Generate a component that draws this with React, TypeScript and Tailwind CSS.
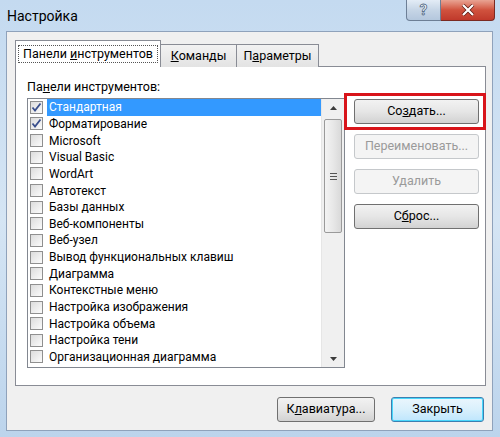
import React from "react";

const items = [
  { label: "Стандартная", checked: true, selected: true },
  { label: "Форматирование", checked: true },
  { label: "Microsoft" },
  { label: "Visual Basic" },
  { label: "WordArt" },
  { label: "Автотекст" },
  { label: "Базы данных" },
  { label: "Веб-компоненты" },
  { label: "Веб-узел" },
  { label: "Вывод функциональных клавиш" },
  { label: "Диаграмма" },
  { label: "Контекстные меню" },
  { label: "Настройка изображения" },
  { label: "Настройка объема" },
  { label: "Настройка тени" },
  { label: "Организационная диаграмма" },
];

function Checkbox({ checked }: { checked?: boolean }) {
  return (
    <div className="w-[13px] h-[13px] shrink-0 border border-[#8f8f8f] bg-gradient-to-br from-[#dcdcdc] to-[#fbfbfb] flex items-center justify-center">
      {checked && (
        <svg width="11" height="11" viewBox="0 0 11 11">
          <path d="M1.5 5.5 L4 8.5 L9.5 1.5" fill="none" stroke="#3a4f8c" strokeWidth="1.8" />
        </svg>
      )}
    </div>
  );
}

function Btn({
  children,
  disabled,
  className = "",
}: {
  children: React.ReactNode;
  disabled?: boolean;
  className?: string;
}) {
  return (
    <div
      className={
        "h-[25px] rounded-[3px] border flex items-center justify-center " +
        (disabled
          ? "border-[#c5c8cb] bg-[#f4f4f4] text-[#9a9a9a] "
          : "border-[#707070] bg-gradient-to-b from-[#f2f2f2] via-[#e6e6e6] to-[#d2d2d2] text-black ") +
        className
      }
    >
      {children}
    </div>
  );
}

export default function App() {
  return (
    <div
      className="w-[500px] h-[437px] relative overflow-hidden bg-gradient-to-b from-[#c4daf0] via-[#d5e5f4] to-[#bcd4ec] text-[12.5px] text-black"
      style={{ fontFamily: "Roboto, 'Noto Sans', sans-serif" }}
    >
      {/* Title bar */}
      <div className="h-[31px] flex items-start">
        <div className="pl-[7px] pt-[6px] text-[14px] text-black">Настройка</div>
        <div className="ml-auto mr-[5px] flex">
          <div className="w-[35px] h-[21px] rounded-bl-[4px] border border-[#6d7f96] border-t-0 bg-gradient-to-b from-[#e3ecf6] via-[#c6d5e6] to-[#b4c7dd] flex items-center justify-center">
            <span className="text-[15px] font-bold text-white leading-none" style={{ WebkitTextStroke: "0.8px #4d6582" }}>
              ?
            </span>
          </div>
          <div className="w-[54px] h-[21px] rounded-br-[4px] border border-[#7a2a22] border-t-0 border-l-0 bg-gradient-to-b from-[#e8a393] via-[#d0523e] to-[#c0392b] flex items-center justify-center">
            <svg width="14" height="12" viewBox="0 0 14 12">
              <path d="M2 1 L12 11 M12 1 L2 11" stroke="#5a1a12" strokeWidth="3.6" />
              <path d="M2 1 L12 11 M12 1 L2 11" stroke="#ffffff" strokeWidth="2.2" />
            </svg>
          </div>
        </div>
      </div>

      {/* Client area */}
      <div className="ml-[6px] w-[487px] h-[400px] border border-[#8fa2bb] bg-[#f0f0f0] pl-[8px] pr-[7px] pt-[8px]">
        {/* Tabs */}
        <div className="flex items-end h-[27px] relative z-10">
          <div className="w-[146px] h-[27px] border border-[#898c95] border-b-0 bg-white flex items-center justify-center">
            <div className="px-[4px] h-[18px] border border-dotted border-[#555] flex items-center">
              Панели <span className="underline ml-[3px]">и</span>нструментов
            </div>
          </div>
          <div className="w-[76px] h-[23px] border border-[#898c95] border-l-0 border-b-0 bg-gradient-to-b from-[#f2f2f2] to-[#e3e3e3] flex items-center justify-center">
            <span className="underline">К</span>оманды
          </div>
          <div className="w-[82px] h-[23px] border border-[#898c95] border-l-0 border-b-0 bg-gradient-to-b from-[#f2f2f2] to-[#e3e3e3] flex items-center justify-center">
            П<span className="underline">а</span>раметры
          </div>
        </div>

        {/* Pane */}
        <div className="w-[471px] h-[320px] -mt-[1px] border border-[#898c95] bg-white pl-[11px] pt-[11px] relative">
          <div className="h-[18px] leading-[18px]">
            Па<span className="underline">н</span>ели инструментов:
          </div>
          <div className="flex mt-[2px] items-start">
            {/* Listbox */}
            <div className="w-[318px] h-[270px] border border-[#828790] flex">
              <div className="flex-1 text-[12px]">
                {items.map((it) => (
                  <div key={it.label} className="h-[16.65px] flex items-center pl-[2px]">
                    <Checkbox checked={it.checked} />
                    <div
                      className={
                        "flex-1 h-full flex items-center pl-[2px] ml-[4px] whitespace-nowrap " +
                        (it.selected ? "bg-[#3399ff] text-white" : "")
                      }
                    >
                      {it.label}
                    </div>
                  </div>
                ))}
              </div>
              {/* Scrollbar */}
              <div className="w-[23px] h-full bg-[#f0f0f0] border-l border-[#e6e6e6] flex flex-col items-center">
                <div className="h-[17px] w-full flex items-center justify-center">
                  <svg width="7" height="4" viewBox="0 0 7 4">
                    <path d="M0 4 L3.5 0 L7 4 Z" fill="#3c3c3c" />
                  </svg>
                </div>
                <div className="mt-[3px] w-[18px] h-[114px] rounded-[2px] border border-[#9a9a9a] bg-gradient-to-r from-[#f3f3f3] via-[#e8e8e8] to-[#d9d9d9] flex flex-col items-center justify-center gap-[2px]">
                  <div className="w-[7px] h-px bg-[#555]" />
                  <div className="w-[7px] h-px bg-[#555]" />
                  <div className="w-[7px] h-px bg-[#555]" />
                </div>
                <div className="mt-auto h-[17px] w-full flex items-center justify-center">
                  <svg width="7" height="4" viewBox="0 0 7 4">
                    <path d="M0 0 L3.5 4 L7 0 Z" fill="#3c3c3c" />
                  </svg>
                </div>
              </div>
            </div>

            {/* Right buttons */}
            <div className="ml-[9px] w-[125px] flex flex-col gap-[10px] pt-[1px]">
              <Btn>
                Со<span className="underline">з</span>дать...
              </Btn>
              <Btn disabled>Переименовать...</Btn>
              <Btn disabled>Удалить</Btn>
              <Btn>
                С<span className="underline">б</span>рос...
              </Btn>
            </div>
          </div>

          {/* Red highlight */}
          <div className="absolute left-[328px] top-[26px] w-[142px] h-[37px] border-[3px] border-[#d8141a]" />
        </div>

        {/* Bottom buttons */}
        <div className="flex justify-end gap-[16px] mt-[11px] pr-[1px]">
          <Btn className="w-[98px]">
            К<span className="underline">л</span>авиатура...
          </Btn>
          <div className="w-[93px] h-[25px] rounded-[3px] border border-[#3c7fb1] shadow-[inset_0_0_0_1px_#48d7fb] bg-gradient-to-b from-[#eaf6fd] via-[#d9f0fc] to-[#bee6fd] flex items-center justify-center">
            Закрыть
          </div>
        </div>
      </div>
    </div>
  );
}
